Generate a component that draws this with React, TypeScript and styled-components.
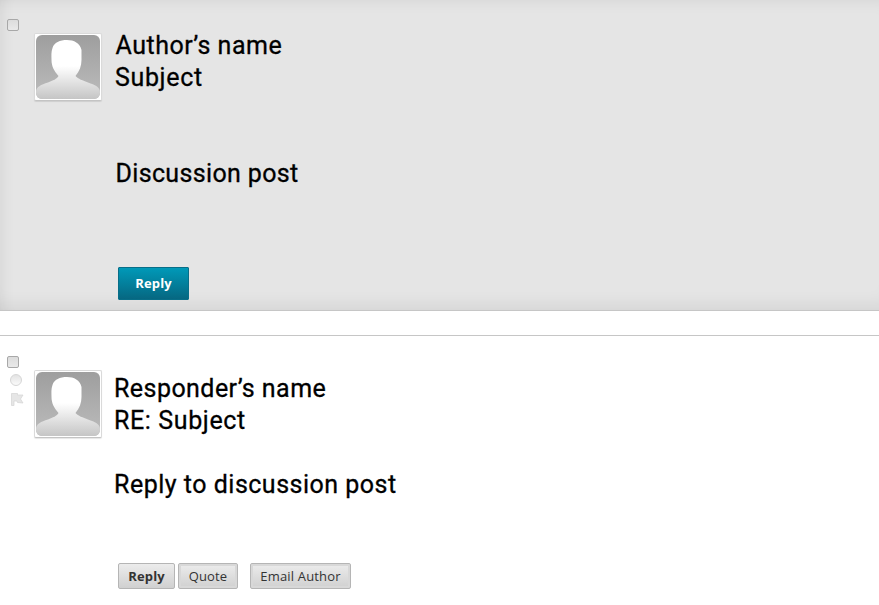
import React from "react";
import styled, { createGlobalStyle, css } from "styled-components";

const GlobalStyle = createGlobalStyle`
  * { box-sizing: border-box; }
  body { margin: 0; background: #fff; font-family: "Open Sans", sans-serif; overflow: hidden; }
`;

const Thread = styled.main`
  display: flex;
  flex-direction: column;
  gap: 24px;
  width: 100%;
  height: 605px;
`;

const Post = styled.article<{ $root?: boolean }>`
  display: grid;
  grid-template-columns: 34px 80px 1fr;
  ${({ $root }) =>
    $root
      ? css`
          height: 311px;
          padding-top: 19px;
          background: #e5e5e5;
          border-bottom: 1px solid #c6c6c6;
          box-shadow: inset 14px 0 16px -14px rgba(0, 0, 0, 0.09),
            inset 0 14px 16px -14px rgba(0, 0, 0, 0.08),
            inset 0 -18px 18px -14px rgba(0, 0, 0, 0.08);
        `
      : css`
          height: 270px;
          padding-top: 20px;
          border-top: 1px solid #c6c6c6;
        `}
`;

const Tools = styled.div`
  display: flex;
  flex-direction: column;
  padding-left: 7px;
`;

const Checkbox = styled.input`
  appearance: none;
  width: 12px;
  height: 12px;
  margin: 0;
  border: 1px solid #a8a8a8;
  border-radius: 2px;
  background: linear-gradient(#dcdcdc, #e9e9e9);
`;

const ReadMark = styled.span`
  width: 12px;
  height: 12px;
  margin: 6px 0 0 3px;
  border: 1px solid #d6d6d6;
  border-radius: 50%;
  background: linear-gradient(#e3e3e3, #fafafa);
`;

const FlagIcon = styled.svg`
  width: 13px;
  height: 14px;
  margin: 6px 0 0 4px;
`;

const Portrait = styled.svg`
  display: block;
  width: 68px;
  height: 68px;
  margin-top: 14px;
  border: 1px solid #dadada;
  border-bottom-color: #c4c4c4;
  border-radius: 2px;
  background: #fff;
  box-shadow: 0 1px 1px rgba(0, 0, 0, 0.1);
`;

const Content = styled.div<{ $offset: number }>`
  display: flex;
  flex-direction: column;
  padding-top: ${({ $offset }) => $offset}px;
`;

const Line = styled.p<{ $spacing: number; $gap?: number; $indent?: number }>`
  margin: ${({ $gap = 0 }) => $gap}px 0 0 ${({ $indent = 0 }) => $indent}px;
  font: 400 25px/32px Roboto, sans-serif;
  letter-spacing: ${({ $spacing }) => $spacing}px;
  color: #000;
  -webkit-text-stroke: 0.3px #000;
  white-space: nowrap;
`;

const Actions = styled.div<{ $gap: number }>`
  display: flex;
  margin: ${({ $gap }) => $gap}px 0 0 4px;
`;

const Button = styled.button<{ $width: number; $after?: number }>`
  width: ${({ $width }) => $width}px;
  height: 26px;
  margin: 0 ${({ $after = 0 }) => $after}px 0 0;
  padding: 0;
  border: 1px solid #b5b5b5;
  border-radius: 2px;
  background: linear-gradient(#ececec, #d0d0d0);
  color: #333;
  font: 400 13px/24px "Open Sans", sans-serif;
  letter-spacing: 0.17px;
  white-space: nowrap;
`;

const StrongButton = styled(Button)`
  font-weight: 700;
`;

const FramedButton = styled(Button)`
  box-shadow: inset 0 0 0 2px #d8d8d8;
`;

const PrimaryButton = styled(Button)`
  height: 33px;
  padding-bottom: 2px;
  border-color: #086e88;
  border-radius: 1px;
  background: linear-gradient(#0099b8, #066781);
  color: #fff;
  font-weight: 700;
`;

function Avatar({ id }: { id: string }) {
  return (
    <Portrait viewBox="0 0 66 66" role="img" aria-label="Profile picture">
      <defs>
        <linearGradient id={`${id}-back`} x2="0" y2="1">
          <stop stopColor="#9e9e9e" />
          <stop offset="1" stopColor="#bcbcbc" />
        </linearGradient>
        <linearGradient id={`${id}-body`} gradientUnits="userSpaceOnUse" x1="0" y1="32" x2="0" y2="65">
          <stop stopColor="#fff" />
          <stop offset="1" stopColor="#c5c5c5" />
        </linearGradient>
        <clipPath id={`${id}-clip`}>
          <rect x="1" y="1" width="64" height="64" rx="6" />
        </clipPath>
      </defs>
      <g clipPath={`url(#${id}-clip)`}>
        <rect x="1" y="1" width="64" height="64" fill={`url(#${id}-back)`} />
        <path
          d="M32 6C25 6 19 8.500 17.500 14C16 18 16.500 22 16.500 26C16.500 32 19 37 23.500 42C22 45 18 46.500 13 48.500C6 50.500 1 53 1 58V65H65V58C65 53 60 51 53 48.500C48 46.500 43 45 40.500 42C44.500 37 46.500 32 46.500 26V16C45 9 39 6 32 6Z"
          fill={`url(#${id}-body)`}
        />
      </g>
    </Portrait>
  );
}

export default function App() {
  return (
    <>
      <GlobalStyle />
      <Thread>
        <Post $root>
          <Tools>
            <Checkbox type="checkbox" aria-label="Select post" />
          </Tools>
          <Avatar id="author" />
          <Content $offset={11}>
            <Line $spacing={0.5} $indent={1.5}>Author’s name</Line>
            <Line $spacing={0.65} $indent={1}>Subject</Line>
            <Line $spacing={0.35} $gap={64} $indent={1.5}>Discussion post</Line>
            <Actions $gap={77}>
              <PrimaryButton $width={71}>Reply</PrimaryButton>
            </Actions>
          </Content>
        </Post>
        <Post>
          <Tools>
            <Checkbox type="checkbox" aria-label="Select reply" />
            <ReadMark />
            <FlagIcon viewBox="0 0 13 14">
              <path d="M.5 1.500H6.500V3H12L9.500 7L12 11L6.500 10.500L6 9H3V13.500H.5Z" fill="#e6e6e6" stroke="#d4d4d4" strokeWidth=".7" />
            </FlagIcon>
          </Tools>
          <Avatar id="responder" />
          <Content $offset={17}>
            <Line $spacing={0.45}>Responder’s name</Line>
            <Line $spacing={0.62}>RE: Subject</Line>
            <Line $spacing={0.5} $gap={32}>Reply to discussion post</Line>
            <Actions $gap={62}>
              <StrongButton $width={57} $after={3}>Reply</StrongButton>
              <FramedButton $width={60} $after={12}>Quote</FramedButton>
              <FramedButton $width={101}>Email Author</FramedButton>
            </Actions>
          </Content>
        </Post>
      </Thread>
    </>
  );
}
